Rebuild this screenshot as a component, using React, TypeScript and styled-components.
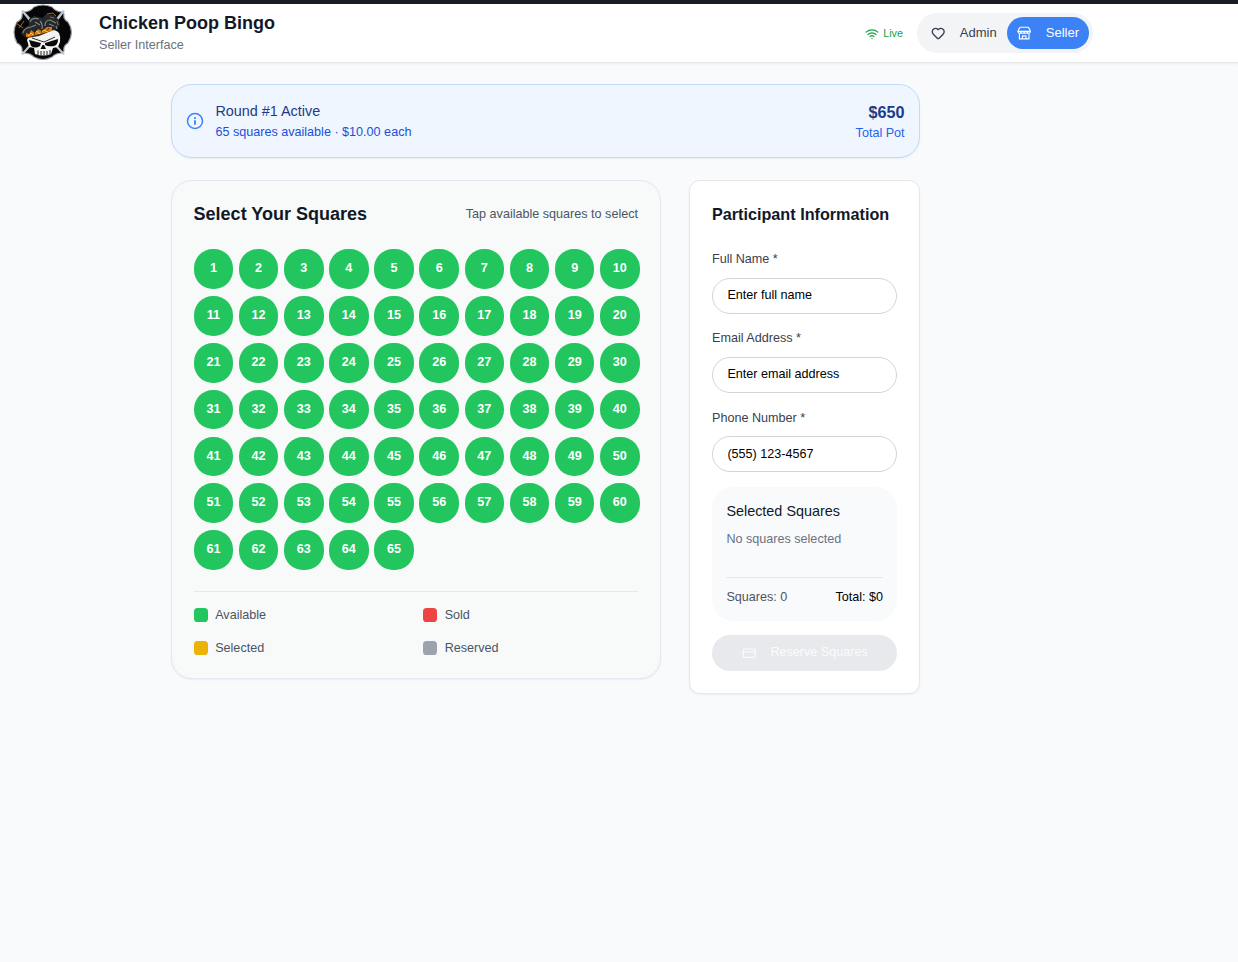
import React from "react";
import styled, { createGlobalStyle, css } from "styled-components";
import { Wifi, Heart, CreditCard } from "lucide-react";

const GlobalStyle = createGlobalStyle`
  *, *::before, *::after { box-sizing: border-box; }
  body {
    margin: 0;
    background: #f9fafb;
    color: #111827;
    font-family: "Liberation Sans", Arial, sans-serif;
    font-size: 14.4px;
    line-height: 21.6px;
  }
  h1, h2, h3, p { margin: 0; font-weight: 400; }
  button, input { font: inherit; }
`;

const Page = styled.div`
  min-height: 962px;
  background: #f8fafc;
`;

const TopStrip = styled.div`
  height: 4px;
  background: #1a1c26;
`;

const Header = styled.header`
  display: flex;
  align-items: center;
  height: 59px;
  padding: 0 145px 0 13px;
  background: #fff;
  border-bottom: 1px solid #e5e7eb;
  box-shadow: 0 1px 2px rgba(0, 0, 0, 0.05);
`;

const Logo = styled.svg`
  width: 60px;
  height: 58px;
  flex: none;
`;

const Brand = styled.div`
  flex: 1;
  margin-left: 26px;
`;

const BrandTitle = styled.h1`
  font-size: 18px;
  font-weight: 700;
  line-height: 22px;
`;

const BrandSub = styled.p`
  font-size: 12.6px;
  line-height: 18px;
  margin-top: 2px;
  color: #6b7280;
`;

const LiveStatus = styled.div`
  display: flex;
  align-items: center;
  gap: 4px;
  margin-right: 14px;
  padding-top: 1px;
  font-size: 10.8px;
  color: #16a34a;
`;

const ModeSwitch = styled.nav`
  display: flex;
  justify-content: space-between;
  height: 40px;
  width: 176px;
  padding: 4px;
  background: #f3f4f6;
  border-radius: 20px;
`;

const ModeButton = styled.button<{ $active?: boolean }>`
  display: flex;
  align-items: center;
  gap: 14.4px;
  height: 32px;
  padding: 0 10px;
  border: 0;
  border-radius: 16px;
  font-size: 13px;
  background: ${(p) => (p.$active ? "#3b82f6" : "transparent")};
  color: ${(p) => (p.$active ? "#fff" : "#374151")};
`;

const Glyph = styled.svg<{ $size: number }>`
  flex: none;
  width: ${(p) => p.$size}px;
  height: ${(p) => p.$size}px;
  fill: none;
  stroke: currentColor;
  stroke-linecap: round;
  stroke-linejoin: round;
`;

const Main = styled.main`
  width: 749px;
  margin: 21px 0 0 171px;
`;

const Banner = styled.section`
  display: flex;
  align-items: center;
  height: 74px;
  padding: 0 14.4px;
  background: #eff6ff;
  border: 1px solid #bfdbfe;
  border-radius: 21px;
  box-shadow: 0 1px 2px rgba(0, 0, 0, 0.05);
  color: #3b82f6;
`;

const BannerText = styled.div<{ $end?: boolean }>`
  ${(p) => (p.$end ? css`text-align: right;` : css`flex: 1; margin-left: 11px;`)}
`;

const BannerTitle = styled.h3`
  font-size: 14.4px;
  color: #1e3a8a;
`;

const BannerNote = styled.p<{ $color: string }>`
  font-size: 12.6px;
  line-height: 18px;
  color: ${(p) => p.$color};
`;

const Pot = styled.p`
  font-size: 16.2px;
  font-weight: 700;
  line-height: 24px;
  color: #1e3a8a;
`;

const Columns = styled.div`
  display: grid;
  grid-template-columns: 489.6px 1fr;
  align-items: start;
  gap: 28.8px;
  margin-top: 22px;
`;

const BoardCard = styled.section`
  padding: 21.6px 21.6px 21px;
  background: #f7faf9;
  border: 1px solid #e2e8f0;
  border-radius: 21px;
  box-shadow: 0 1px 2px rgba(0, 0, 0, 0.05);
`;

const BoardHead = styled.div`
  display: flex;
  align-items: center;
  justify-content: space-between;
  height: 25.2px;
  margin-bottom: 21.6px;
`;

const BoardTitle = styled.h2`
  font-size: 18px;
  font-weight: 700;
`;

const Hint = styled.p`
  font-size: 12.6px;
  color: #4b5563;
`;

const SquareGrid = styled.div`
  display: grid;
  grid-template-columns: repeat(10, minmax(0, 1fr));
  gap: 7.2px;
`;

const Square = styled.button`
  width: 39.6px;
  height: 39.6px;
  padding: 0;
  border: 0;
  border-radius: 19px;
  background: #22c55e;
  color: #fff;
  font-size: 12.6px;
  font-weight: 700;
`;

const Legend = styled.div`
  display: grid;
  grid-template-columns: 1fr 1fr;
  gap: 14.6px;
  margin-top: 21.6px;
  padding-top: 14px;
  border-top: 1px solid #e5e7eb;
`;

const LegendItem = styled.div`
  display: flex;
  align-items: center;
  gap: 7.2px;
  font-size: 12.6px;
  line-height: 18px;
  color: #4b5563;
`;

const Swatch = styled.span<{ $color: string }>`
  width: 14.4px;
  height: 14.4px;
  border-radius: 3.6px;
  background: ${(p) => p.$color};
`;

const FormCard = styled.section`
  padding: 21.6px;
  background: #fff;
  border: 1px solid #e5e7eb;
  border-radius: 10.8px;
  box-shadow: 0 1px 2px rgba(0, 0, 0, 0.05);
`;

const FormTitle = styled.h2`
  font-size: 16.2px;
  font-weight: 700;
  line-height: 23.4px;
  margin-bottom: 23.2px;
`;

const Field = styled.label`
  display: block;
  height: 64.8px;
  margin-bottom: 14.4px;
  font-size: 12.6px;
  color: #374151;
`;

const FieldLabel = styled.span`
  display: block;
  line-height: 20px;
  margin-bottom: 8.6px;
`;

const TextInput = styled.input`
  display: block;
  width: 100%;
  height: 36px;
  padding: 0 14.4px 1px;
  border: 1px solid #d1d5db;
  border-radius: 18px;
  background: #fff;
  outline: 0;
  &::placeholder { color: #000; opacity: 1; }
`;

const Summary = styled.div`
  height: 133.8px;
  padding: 14.4px;
  background: #f9fafb;
  border-radius: 21px;
`;

const SummaryTitle = styled.h3`
  font-size: 14.4px;
  line-height: 20px;
`;

const SummaryEmpty = styled.p`
  height: 46.6px;
  margin-top: 9px;
  font-size: 12.6px;
  line-height: 18px;
  color: #6b7280;
`;

const SummaryTotals = styled.div`
  display: flex;
  justify-content: space-between;
  padding-top: 10.2px;
  border-top: 1px solid #e5e7eb;
  font-size: 12.6px;
  line-height: 18px;
  color: #4b5563;
`;

const TotalValue = styled.span`
  color: #000;
`;

const ReserveButton = styled.button`
  display: flex;
  align-items: center;
  justify-content: center;
  gap: 14.4px;
  width: 100%;
  height: 36px;
  margin-top: 14.4px;
  border: 0;
  border-radius: 18px;
  background: #e8e9ed;
  color: #fbfbfc;
  font-size: 12.6px;
`;

const squares = Array.from({ length: 65 }, (_, i) => i + 1);

const legend = [
  { name: "Available", color: "#22c55e" },
  { name: "Sold", color: "#ef4444" },
  { name: "Selected", color: "#eab308" },
  { name: "Reserved", color: "#9ca3af" },
];

const fields = [
  { label: "Full Name *", placeholder: "Enter full name" },
  { label: "Email Address *", placeholder: "Enter email address" },
  { label: "Phone Number *", placeholder: "(555) 123-4567" },
];

function SkullLogo() {
  return (
    <Logo viewBox="0 0 60 58">
      {/* four-lobed cross */}
      <path
        d="M10 8Q17 8 21 3Q30 -1 39 3Q43 8 50 8L51 10Q50 15 55 18Q62 28 55 39Q50 42 51 47L49 49Q43 49 39 53Q30 58 21 53Q17 49 11 49L9 47Q10 42 4 39Q-2 28 4 18Q10 15 9 10Z"
        fill="#060608" stroke="#9ba0a6" strokeWidth="1.2" strokeLinejoin="round"
      />
      {/* steel wedges */}
      <path d="M8 7L10 6L20 17L17 18ZM52 7L50 6L40 18L43 19ZM8 50L10 51L19 41L17 40ZM52 50L50 51L41 41L43 40Z" fill="#bfc5ca" />
      {/* skull */}
      <path d="M14 36Q15 32 21 31L36 26Q42 25 46 29Q48 33 47 38L45 43L40 44L38 50Q30 53 22 50L21 44L16 43Z" fill="#f3f3f1" />
      <path d="M16 36L28 39L27 42Q22 45 18 42ZM32 39L45 35Q45 41 41 42Q35 43 32 41ZM29.5 41L31 41L33 45L27.5 45Z" fill="#08090b" />
      <path d="M19 34L28 37L31 38L42 33" stroke="#16171a" strokeWidth="0.9" fill="none" />
      <path d="M25 46.5V51M28 47V51.5M31 47V51.5M34 47V51.5M37 46V50" stroke="#26272a" strokeWidth="1" />
      {/* coiled snake and flaming band */}
      <path d="M8 30L10 25L16 21L16 15L21 12L30 14L33 10L41 11L46 16L47 21L44 25L38 27L26 32L14 34Z" fill="#25282a" />
      <path d="M13 33L13 29L16 30L18 26L22 29L25 25L29 27L34 23L39 23L39 27Q26 30 16 33Z" fill="#d9780f" />
      <path d="M15 32L18 29L20 31L24 27L26 30L31 26L35 28" stroke="#ffd23e" strokeWidth="0.9" fill="none" />
      <path d="M16 30L17 27M21 31L22 28M28 29L29 25M34 27L36 24" stroke="#5a2108" strokeWidth="0.9" />
      <path d="M10 29Q11 24 18 23L23 21M17 18Q19 13 26 15M27 17Q30 20 29 25M32 22Q32 16 37 16L43 19M22 18L27 21M36 20L41 22M43 22L44 25" fill="none" stroke="#7f8588" strokeWidth="1.2" />
      <path d="M3 19L10 24M6 24L11 17M34 10L40 9L43 12M37 13L41 14M44 17L45 21" fill="none" stroke="#a8661c" strokeWidth="1" />
    </Logo>
  );
}

function StoreIcon() {
  return (
    <Glyph $size={14.4} viewBox="0 0 24 24" strokeWidth="1.9">
      <path d="M5.5 2h13q2.8 1.8 3.7 7H1.8Q2.7 3.800 5.500 2z" />
      <path d="M1.800 9c0 4 5 4 5 0c0 4 5.200 4 5.200 0c0 4 5.200 4 5.200 0c0 4 5 4 5 0" />
      <path d="M4 13v8.500h16V13M9 21.500v-5h6v5" />
    </Glyph>
  );
}

function InfoIcon() {
  return (
    <Glyph $size={18} viewBox="0 0 24 24" strokeWidth="2">
      <circle cx="12" cy="12" r="10" />
      <path d="M12 11v6M12 7v2.400" strokeWidth="2.400" strokeLinecap="butt" />
    </Glyph>
  );
}

export default function App() {
  return (
    <Page>
      <GlobalStyle />
      <TopStrip />
      <Header>
        <SkullLogo />
        <Brand>
          <BrandTitle>Chicken Poop Bingo</BrandTitle>
          <BrandSub>Seller Interface</BrandSub>
        </Brand>
        <LiveStatus><Wifi size={14} /><span>Live</span></LiveStatus>
        <ModeSwitch>
          <ModeButton><Heart size={14.4} strokeWidth={2.3} /><span>Admin</span></ModeButton>
          <ModeButton $active><StoreIcon /><span>Seller</span></ModeButton>
        </ModeSwitch>
      </Header>
      <Main>
        <Banner>
          <InfoIcon />
          <BannerText>
            <BannerTitle>Round #1 Active</BannerTitle>
            <BannerNote $color="#1d4ed8">65 squares available · $10.00 each</BannerNote>
          </BannerText>
          <BannerText $end>
            <Pot>$650</Pot>
            <BannerNote $color="#2563eb">Total Pot</BannerNote>
          </BannerText>
        </Banner>
        <Columns>
          <BoardCard>
            <BoardHead>
              <BoardTitle>Select Your Squares</BoardTitle>
              <Hint>Tap available squares to select</Hint>
            </BoardHead>
            <SquareGrid>
              {squares.map((n) => <Square key={n}>{n}</Square>)}
            </SquareGrid>
            <Legend>
              {legend.map((l) => (
                <LegendItem key={l.name}><Swatch $color={l.color} />{l.name}</LegendItem>
              ))}
            </Legend>
          </BoardCard>
          <FormCard>
            <FormTitle>Participant Information</FormTitle>
            {fields.map((f) => (
              <Field key={f.label}>
                <FieldLabel>{f.label}</FieldLabel>
                <TextInput placeholder={f.placeholder} />
              </Field>
            ))}
            <Summary>
              <SummaryTitle>Selected Squares</SummaryTitle>
              <SummaryEmpty>No squares selected</SummaryEmpty>
              <SummaryTotals><span>Squares: 0</span><TotalValue>Total: $0</TotalValue></SummaryTotals>
            </Summary>
            <ReserveButton disabled><CreditCard size={14.4} /><span>Reserve Squares</span></ReserveButton>
          </FormCard>
        </Columns>
      </Main>
    </Page>
  );
}
